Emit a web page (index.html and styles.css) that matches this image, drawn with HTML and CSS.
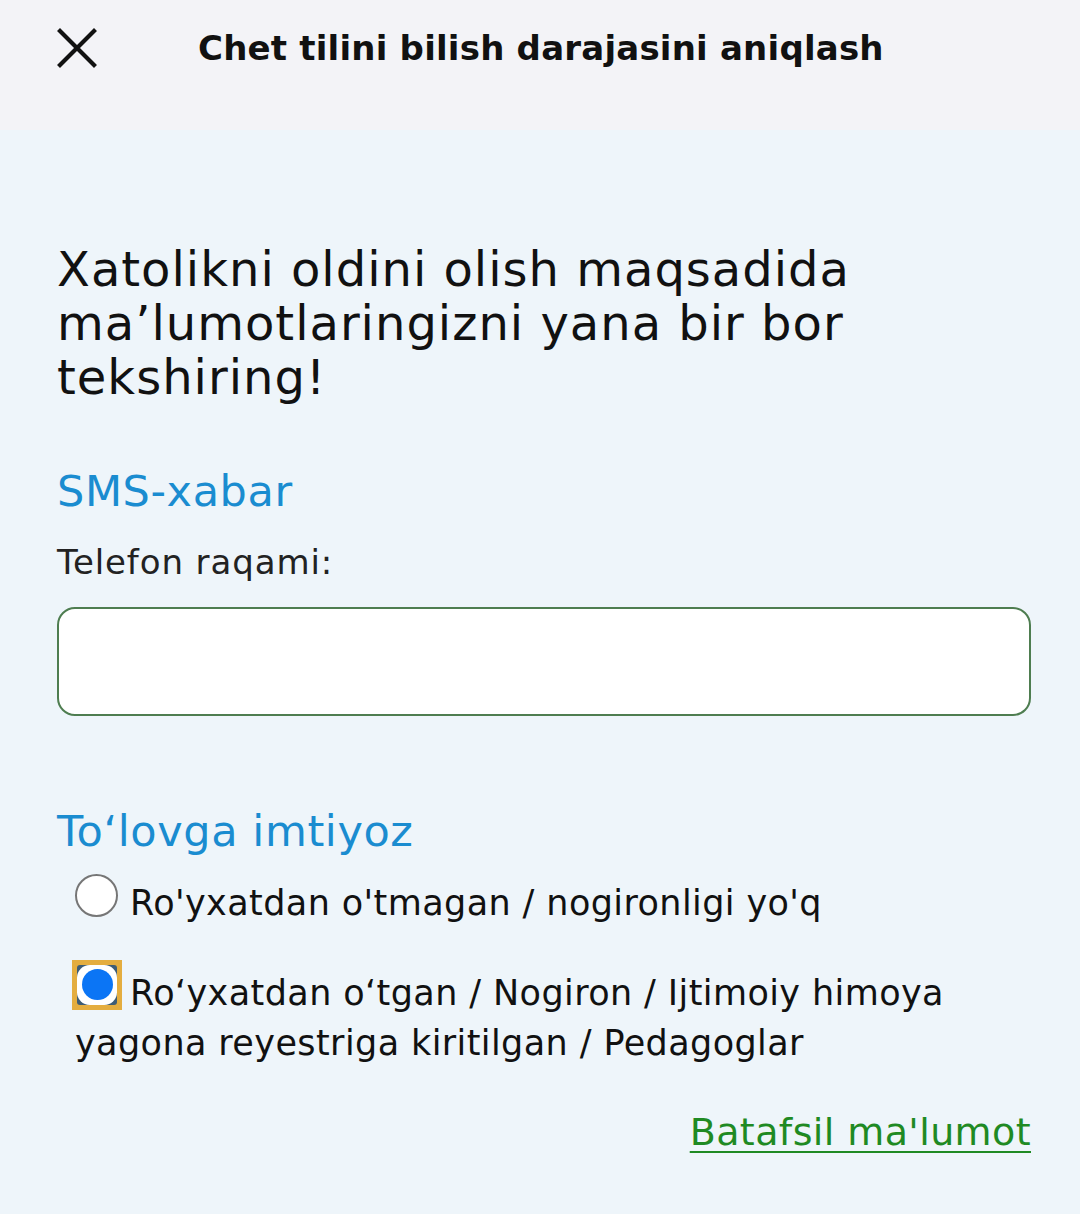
FILE: index.html
```html
<!DOCTYPE html>
<html lang="uz">
<head>
<meta charset="utf-8">
<link rel="stylesheet" href="styles.css">
</head>
<body>
<header class="topbar">
  <button class="close" aria-label="Yopish">
    <svg viewBox="0 0 40 40" width="40" height="40"><path d="M3 3 L37 37 M37 3 L3 37" stroke="#111" stroke-width="4.2" stroke-linecap="square" fill="none"/></svg>
  </button>
  <h1 class="title">Chet tilini bilish darajasini aniqlash</h1>
</header>
<main class="content">
  <p class="lead">Xatolikni oldini olish maqsadida ma’lumotlaringizni yana bir bor tekshiring!</p>

  <h2 class="section">SMS-xabar</h2>
  <label class="field-label" for="phone">Telefon raqami:</label>
  <input class="input" id="phone" type="text">

  <h2 class="section section-gap">To‘lovga imtiyoz</h2>
  <div class="options">
    <label class="option">
      <span class="radio"></span>Ro'yxatdan o'tmagan / nogironligi yo'q
    </label>
    <label class="option option-second">
      <span class="radio-focus"><span class="radio-checked"><span class="dot"></span></span></span>Ro‘yxatdan o‘tgan / Nogiron / Ijtimoiy himoya yagona reyestriga kiritilgan / Pedagoglar
    </label>
  </div>
  <div class="more"><a href="#" class="link">Batafsil ma'lumot</a></div>
</main>
</body>
</html>
```
FILE: styles.css
```css
html, body {
  margin: 0;
  padding: 0;
}
body {
  background: #eef5fa;
  font-family: "DejaVu Sans", "Noto Sans", sans-serif;
  color: #111;
  width: 1080px;
  min-height: 1214px;
}
.topbar {
  background: #f3f3f7;
  height: 130px;
  display: flex;
  align-items: center;
  padding: 0 0 34px 0;
  box-sizing: border-box;
}
.close {
  background: none;
  border: 0;
  padding: 0;
  margin: 0 0 0 57px;
  width: 40px;
  height: 40px;
  display: flex;
}
.title {
  margin: 0 0 0 101px;
  font-size: 34px;
  font-weight: 700;
  letter-spacing: 0.2px;
  color: #111;
}
.content {
  padding: 112px 49px 0 57px;
}
.lead {
  margin: 0;
  font-size: 48px;
  line-height: 54px;
  font-weight: 400;
  letter-spacing: 1px;
  color: #111;
}
.section {
  margin: 62px 0 0 0;
  font-size: 43px;
  line-height: 50px;
  font-weight: 400;
  letter-spacing: 0.6px;
  color: #1a8cd0;
}
.section-gap {
  margin-top: 90px;
}
.field-label {
  display: block;
  margin-top: 26px;
  font-size: 34px;
  line-height: 40px;
  letter-spacing: 0.9px;
  color: #222;
}
.input {
  display: block;
  margin-top: 25px;
  width: 100%;
  height: 109px;
  box-sizing: border-box;
  border: 2px solid #4e7d50;
  border-radius: 18px;
  background: #fff;
  outline: none;
}
.options {
  padding-left: 18px;
  margin-top: 18px;
}
.option {
  display: block;
  font-size: 35px;
  line-height: 50px;
  letter-spacing: 0.4px;
  color: #111;
}
.option-second {
  margin-top: 40px;
}
.radio {
  display: inline-block;
  width: 43px;
  height: 43px;
  box-sizing: border-box;
  border: 2.5px solid #767676;
  border-radius: 50%;
  background: #fff;
  vertical-align: -2px;
  margin-right: 12px;
}
.radio-focus {
  display: inline-block;
  box-sizing: border-box;
  width: 50px;
  height: 50px;
  padding: 5px;
  background: #e4ad3f;
  vertical-align: 5px;
  margin: -19px 8px 0 -3px;
}
.radio-checked {
  width: 40px;
  height: 40px;
  background: #3d5c76;
  border-radius: 3px;
  display: flex;
  align-items: center;
  justify-content: center;
  position: relative;
}
.radio-checked::before {
  content: "";
  position: absolute;
  inset: 0;
  border-radius: 32%;
  background: #fff;
}
.dot {
  position: relative;
  width: 31px;
  height: 31px;
  border-radius: 50%;
  background: #0b75f5;
}
.more {
  text-align: right;
  margin-top: 42px;
}
.link {
  font-size: 38px;
  letter-spacing: 0.4px;
  color: #1f8a23;
  text-decoration: underline;
  text-decoration-thickness: 2px;
  text-underline-offset: 6px;
}
```
